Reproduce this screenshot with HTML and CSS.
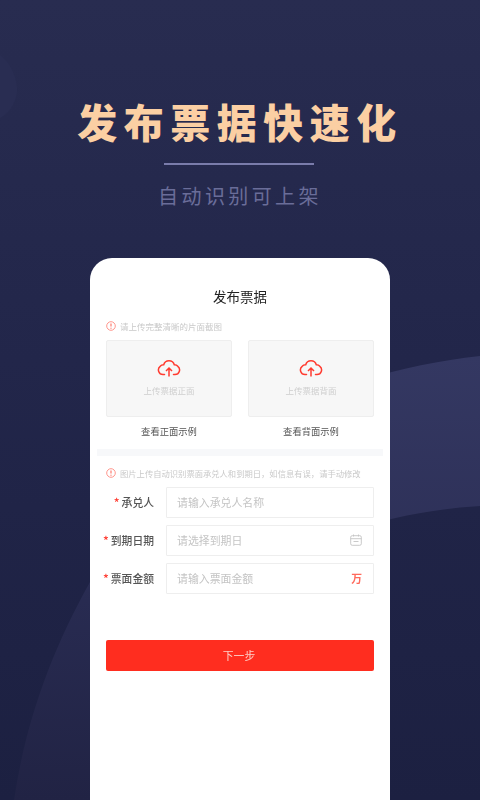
FILE: index.html
```html
<!DOCTYPE html>
<html lang="zh-CN">
<head>
<meta charset="utf-8">
<title>发布票据</title>
<link rel="stylesheet" href="styles.css">
</head>
<body>
<main class="screen">
  <svg class="decor" viewBox="0 0 480 800" aria-hidden="true">
    <defs>
      <linearGradient id="bg" x1="0" y1="0" x2="0" y2="1">
        <stop offset="0" stop-color="#282c50"/>
        <stop offset="0.45" stop-color="#22264a"/>
        <stop offset="1" stop-color="#1c2041"/>
      </linearGradient>
      <linearGradient id="wave" gradientUnits="userSpaceOnUse" x1="0" y1="356" x2="0" y2="800">
        <stop offset="0" stop-color="#343862"/>
        <stop offset="0.4" stop-color="#2e3159"/>
        <stop offset="0.55" stop-color="#282b51"/>
        <stop offset="1" stop-color="#212344"/>
      </linearGradient>
    </defs>
    <rect width="480" height="800" fill="url(#bg)"/>
    <path d="M0 55C10 62 18 78 17 92C16 104 8 114 0 118Z" fill="#292d52"/>
    <path d="M14 800C26 720 52 650 90 582C160 450 320 374 480 356V506C410 510 330 530 260 570C170 630 150 720 150 800Z" fill="url(#wave)"/>
  </svg>

  <header class="hero">
    <h1 class="hero-title">发布票据快速化</h1>
    <div class="hero-rule"></div>
    <p class="hero-sub">自动识别可上架</p>
  </header>

  <section class="card">
    <h2 class="card-title">发布票据</h2>
    <div class="upload-area">
      <p class="hint">
        <svg class="hint-icon" viewBox="0 0 10 10"><circle cx="5" cy="5" r="4.300" fill="none" stroke="#ff8a80" stroke-width="0.900"/><path d="M5 2.600V5.600" stroke="#ff6d60" stroke-width="1.100"/><circle cx="5" cy="7.200" r="0.600" fill="#ff6d60"/></svg>
        请上传完整清晰的片面截图
      </p>
      <div class="upload-grid">
        <div class="upload-col">
          <div class="upload-box">
            <svg class="cloud" viewBox="0 0 24 18"><path d="M7.500 15.500H6A4.600 4.600 0 0 1 3.200 7.300 A4.200 4.200 0 0 1 6.700 5.700 A5.500 5.500 0 0 1 17.300 5.700 A4.200 4.200 0 0 1 20.800 7.300 A4.600 4.600 0 0 1 18 15.500H16.500" fill="none" stroke="#ff3b30" stroke-width="1.500" stroke-linecap="round"/><path d="M12 17.500V9.500M9 12L12 9L15 12" fill="none" stroke="#ff3b30" stroke-width="1.500"/></svg>
            <span class="upload-text">上传票据正面</span>
          </div>
          <span class="example">查看正面示例</span>
        </div>
        <div class="upload-col">
          <div class="upload-box">
            <svg class="cloud" viewBox="0 0 24 18"><path d="M7.500 15.500H6A4.600 4.600 0 0 1 3.200 7.300 A4.200 4.200 0 0 1 6.700 5.700 A5.500 5.500 0 0 1 17.300 5.700 A4.200 4.200 0 0 1 20.800 7.300 A4.600 4.600 0 0 1 18 15.500H16.500" fill="none" stroke="#ff3b30" stroke-width="1.500" stroke-linecap="round"/><path d="M12 17.500V9.500M9 12L12 9L15 12" fill="none" stroke="#ff3b30" stroke-width="1.500"/></svg>
            <span class="upload-text">上传票据背面</span>
          </div>
          <span class="example">查看背面示例</span>
        </div>
      </div>
    </div>

    <div class="band"></div>

    <div class="form-area">
      <p class="hint hint-form">
        <svg class="hint-icon" viewBox="0 0 10 10"><circle cx="5" cy="5" r="4.300" fill="none" stroke="#ff8a80" stroke-width="0.900"/><path d="M5 2.600V5.600" stroke="#ff6d60" stroke-width="1.100"/><circle cx="5" cy="7.200" r="0.600" fill="#ff6d60"/></svg>
        图片上传自动识别票面承兑人和到期日，如信息有误，请手动修改
      </p>
      <div class="field">
        <label class="field-label"><span class="star">*</span>承兑人</label>
        <div class="input"><span class="placeholder">请输入承兑人名称</span></div>
      </div>
      <div class="field">
        <label class="field-label"><span class="star">*</span>到期日期</label>
        <div class="input"><span class="placeholder">请选择到期日</span>
          <svg class="calendar" viewBox="0 0 12 12"><rect x="0.700" y="1.700" width="10.600" height="9.600" rx="1.500" fill="none" stroke="#c4c4c4" stroke-width="0.900"/><path d="M0.700 4.700H11.300M3.500 0.500V2.500M8.500 0.500V2.500M3.500 7.500H8.500" fill="none" stroke="#c4c4c4" stroke-width="0.900"/></svg>
        </div>
      </div>
      <div class="field">
        <label class="field-label"><span class="star">*</span>票面金额</label>
        <div class="input"><span class="placeholder">请输入票面金额</span><span class="unit">万</span></div>
      </div>
      <button class="next" type="button">下一步</button>
    </div>
  </section>
</main>
</body>
</html>
```
FILE: styles.css
```css
* { box-sizing: border-box; }
html, body { margin: 0; padding: 0; }
body {
  width: 480px;
  height: 800px;
  overflow: hidden;
  font-family: "Noto Sans CJK SC", "Noto Sans", sans-serif;
}
.screen {
  position: relative;
  width: 480px;
  height: 800px;
  overflow: hidden;
  padding-top: 94px;
  background: #21254a;
}
.decor {
  position: absolute;
  inset: 0;
  width: 480px;
  height: 800px;
}
.hero {
  position: relative;
  display: flex;
  flex-direction: column;
  align-items: center;
}
.hero-title {
  margin: 0;
  height: 54px;
  font-size: 40px;
  line-height: 54px;
  font-weight: 900;
  letter-spacing: 6.500px;
  color: #fbcfa3;
}
.hero-rule {
  width: 150px;
  height: 2px;
  margin-top: 15px;
  margin-right: 2px;
  background: #7a7cab;
}
.hero-sub {
  margin: 16px 0 0;
  font-size: 20px;
  line-height: 30px;
  letter-spacing: 3.400px;
  color: #6a6d99;
}
.card {
  position: absolute;
  left: 90px;
  top: 258px;
  width: 300px;
  height: 560px;
  background: #fff;
  border-radius: 22px 22px 0 0;
  filter: blur(0.35px);
}
.card-title {
  margin: 28px 0 0;
  font-size: 13.500px;
  line-height: 20px;
  font-weight: 400;
  text-align: center;
  color: #222;
}
.upload-area { padding: 13px 16px 0; }
.hint {
  display: flex;
  align-items: center;
  gap: 4px;
  margin: 0;
  height: 14px;
  font-size: 8.500px;
  line-height: 14px;
  color: #c9c9c9;
  white-space: nowrap;
}
.hint-icon { width: 10px; height: 10px; flex: none; }
.upload-grid {
  display: grid;
  grid-template-columns: 126px 126px;
  gap: 16px;
  margin-top: 7px;
}
.upload-col { display: flex; flex-direction: column; align-items: center; }
.upload-box {
  width: 126px;
  height: 77px;
  display: flex;
  flex-direction: column;
  align-items: center;
  padding-top: 18px;
  background: #f7f7f7;
  border: 1px solid #eeeeee;
  border-radius: 2px;
}
.cloud { width: 24px; height: 18px; }
.upload-text {
  margin-top: 6px;
  font-size: 8.500px;
  line-height: 14px;
  color: #cfcfcf;
}
.example {
  margin-top: 7px;
  font-size: 9.300px;
  line-height: 14px;
  color: #555;
}
.band {
  width: 286px;
  height: 7px;
  margin: 11px auto 0;
  background: #f7f8fa;
}
.form-area { padding: 10px 16px 0; }
.hint-form { font-size: 8.300px; margin-bottom: 7px; }
.field {
  display: flex;
  align-items: center;
  gap: 11px;
  margin-bottom: 7.500px;
}
.field-label {
  display: flex;
  justify-content: flex-end;
  align-items: center;
  width: 49px;
  padding-right: 1px;
  font-size: 10.800px;
  line-height: 16px;
  font-weight: 500;
  white-space: nowrap;
  color: #555;
}
.star { color: #ff3b30; margin-right: 2px; font-size: 12px; }
.input {
  display: flex;
  align-items: center;
  justify-content: space-between;
  width: 208px;
  height: 30.500px;
  padding: 0 11px 0 10px;
  border: 1px solid #eeeeee;
  border-radius: 1px;
  background: #fff;
}
.placeholder {
  font-size: 10.900px;
  line-height: 16px;
  color: #c4c4c4;
}
.calendar { width: 12px; height: 12px; }
.unit {
  font-size: 10.800px;
  line-height: 16px;
  font-weight: 700;
  color: #ff6a5c;
}
.next {
  display: block;
  width: 268px;
  height: 30.500px;
  margin-top: 46.500px;
  padding: 0 2px 0 0;
  border: 0;
  border-radius: 2px;
  background: #ff2d1f;
  color: #ffd0c8;
  font-family: inherit;
  font-size: 10.800px;
  line-height: 30px;
}
```
